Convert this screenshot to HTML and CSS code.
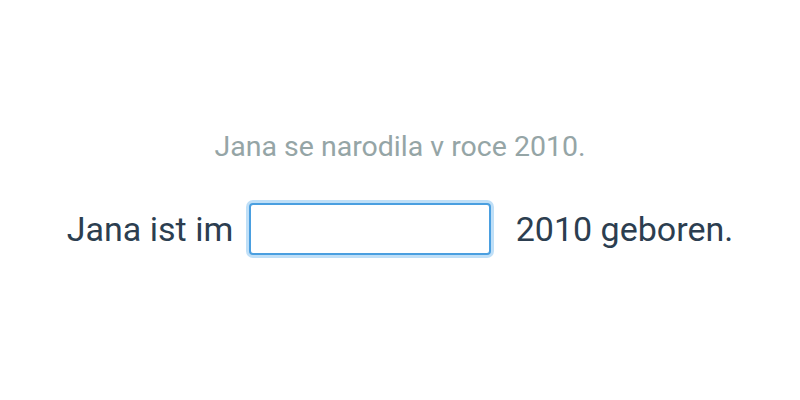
FILE: index.html
```html
<!DOCTYPE html>
<html>
<head>
<meta charset="utf-8">
<link rel="stylesheet" href="styles.css">
</head>
<body>
<main class="page">
  <p class="hint">Jana se narodila v roce 2010.</p>
  <div class="sentence">
    <span class="part">Jana ist im</span>
    <input class="gap" type="text">
    <span class="part">&nbsp;2010 geboren.</span>
  </div>
</main>
</body>
</html>
```
FILE: styles.css
```css
html, body {
  margin: 0;
  padding: 0;
  background: #ffffff;
}
body {
  font-family: Roboto, "Noto Sans", sans-serif;
  width: 800px;
  height: 400px;
}
.page {
  display: flex;
  flex-direction: column;
  align-items: center;
  padding-top: 127px;
}
.hint {
  margin: 0;
  font-size: 28.5px;
  line-height: 40px;
  color: #95a5a6;
}
.sentence {
  display: flex;
  align-items: center;
  margin-top: 36px;
  font-size: 34px;
  color: #2c3e50;
}
.gap {
  width: 242px;
  height: 52px;
  box-sizing: border-box;
  margin: 0 16px;
  border: 2px solid #4a9fe0;
  border-radius: 4px;
  box-shadow: 0 0 0 3px #bfdff7;
  outline: none;
  background: #fff;
  font: inherit;
}
```
